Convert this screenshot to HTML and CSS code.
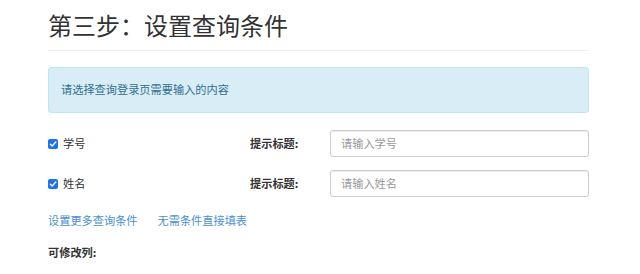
FILE: index.html
```html
<!DOCTYPE html>
<html lang="zh-CN">
<head>
<meta charset="utf-8">
<title>第三步：设置查询条件</title>
<link rel="stylesheet" href="styles.css">
</head>
<body>
<div class="container">
  <div class="page-header"><h2 class="title">第三步：设置查询条件</h2></div>
  <div class="alert">请选择查询登录页需要输入的内容</div>
  <div class="rows">
    <div class="row">
      <label class="check">
        <span class="box"><svg viewBox="0 0 10 10" width="10" height="10"><rect x="0" y="0" width="10" height="10" rx="2" fill="#1a73e8"/><path d="M2.3 5.2 L4.2 7 L7.8 3" fill="none" stroke="#fff" stroke-width="1.5" stroke-linecap="round" stroke-linejoin="round"/></svg></span>
        <span class="name">学号</span>
      </label>
      <span class="hint">提示标题:</span>
      <input class="field" type="text" placeholder="请输入学号">
    </div>
    <div class="row">
      <label class="check">
        <span class="box"><svg viewBox="0 0 10 10" width="10" height="10"><rect x="0" y="0" width="10" height="10" rx="2" fill="#1a73e8"/><path d="M2.3 5.2 L4.2 7 L7.8 3" fill="none" stroke="#fff" stroke-width="1.5" stroke-linecap="round" stroke-linejoin="round"/></svg></span>
        <span class="name">姓名</span>
      </label>
      <span class="hint">提示标题:</span>
      <input class="field" type="text" placeholder="请输入姓名">
    </div>
  </div>
  <div class="links">
    <a href="#" class="link">设置更多查询条件</a>
    <a href="#" class="link">无需条件直接填表</a>
  </div>
  <div class="section">可修改列:</div>
</div>
</body>
</html>
```

FILE: styles.css
```css
html, body {
  margin: 0;
  padding: 0;
  background: #fff;
}
body {
  font-family: "Liberation Sans", "Noto Sans CJK SC", sans-serif;
  font-size: 11.2px;
  color: #333;
}
.container {
  width: 541px;
  padding-left: 48px;
}
.page-header {
  margin-top: 12px;
  padding-bottom: 12px;
  border-bottom: 1px solid #eee;
}
.title {
  margin: 0;
  font-family: "Noto Sans CJK SC", sans-serif;
  font-size: 24px;
  line-height: 26.4px;
  font-weight: 400;
  color: #333;
}
.alert {
  margin-top: 16px;
  padding: 12px 12px;
  line-height: 19.5px;
  background: #d9edf7;
  border: 1px solid #bce8f1;
  border-radius: 3px;
  color: #31708f;
  font-family: "Noto Sans CJK SC", sans-serif;
}
.rows {
  margin-top: 17px;
  display: flex;
  flex-direction: column;
  gap: 13px;
}
.row {
  display: flex;
  align-items: center;
  height: 27px;
}
.check {
  width: 202px;
  display: flex;
  align-items: center;
  font-family: "Noto Sans CJK SC", sans-serif;
  color: #333;
}
.box {
  width: 10px;
  height: 10px;
  display: flex;
  margin-top: 2px;
}
.name {
  margin-left: 5px;
}
.hint {
  width: 80px;
  font-weight: 700;
  font-family: "Noto Sans CJK SC", sans-serif;
  color: #333;
}
.field {
  flex: 1;
  box-sizing: border-box;
  height: 27px;
  margin: 0;
  padding: 0 10px;
  border: 1px solid #ccc;
  border-radius: 3px;
  box-shadow: inset 0 1px 1px rgba(0,0,0,0.075);
  font-family: "Noto Sans CJK SC", sans-serif;
  font-size: 11.2px;
  color: #555;
  outline: none;
}
.field::placeholder {
  color: #999;
}
.links {
  margin-top: 15px;
  display: flex;
  gap: 20px;
  line-height: 16px;
}
.link {
  color: #4a8fd4;
  text-decoration: none;
  font-family: "Noto Sans CJK SC", sans-serif;
}
.section {
  margin-top: 16px;
  line-height: 16px;
  font-weight: 700;
  font-family: "Noto Sans CJK SC", sans-serif;
  color: #333;
}
```
